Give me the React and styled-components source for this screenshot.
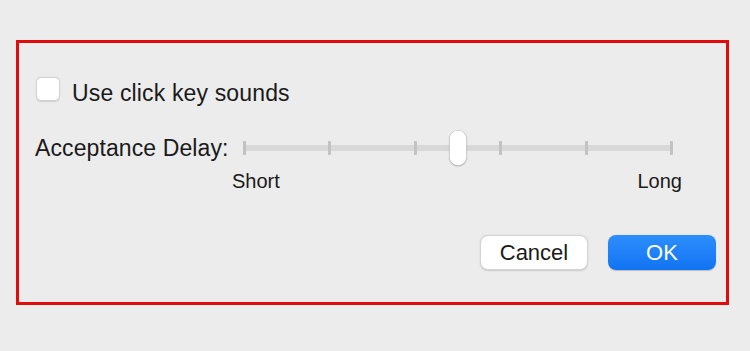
import React from "react";
import styled, { createGlobalStyle } from "styled-components";

const Global = createGlobalStyle`
  html, body {
    margin: 0;
    padding: 0;
    background: #ececec;
  }
  body {
    font-family: "Liberation Sans", Arial, sans-serif;
    color: #1a1a1a;
  }
`;

const Page = styled.div`
  width: 750px;
  height: 351px;
  padding: 40px 0 0 16px;
  box-sizing: border-box;
  background: #ececec;
`;

const Frame = styled.div`
  width: 713px;
  height: 265px;
  box-sizing: border-box;
  border: 3px solid #e20b0b;
  padding: 34px 10px 0 16px;
  display: flex;
  flex-direction: column;
`;

const CheckRow = styled.label`
  display: flex;
  align-items: flex-start;
  gap: 12px;
  padding-left: 1px;
`;

const Box = styled.span`
  width: 24px;
  height: 24px;
  box-sizing: border-box;
  border-radius: 5px;
  background: #ffffff;
  border: 1px solid #d2d2d2;
  box-shadow: 0 0.5px 1px rgba(0, 0, 0, 0.12);
`;

const CheckText = styled.span`
  font-size: 23px;
  line-height: 24px;
  margin-top: 4px;
  letter-spacing: 0.15px;
`;

const DelayRow = styled.div`
  display: flex;
  align-items: flex-start;
  margin-top: 25px;
`;

const DelayLabel = styled.span`
  width: 197px;
  flex: none;
  font-size: 23px;
  line-height: 36px;
  letter-spacing: 0.1px;
`;

const Slider = styled.div`
  width: 450px;
  display: flex;
  flex-direction: column;
`;

const TrackArea = styled.div`
  height: 36px;
  margin: 0 9px 0 11px;
  display: flex;
  align-items: center;
  position: relative;
`;

const Track = styled.div`
  flex: 1;
  height: 14px;
  display: flex;
  justify-content: space-between;
  background: linear-gradient(
    to bottom,
    transparent 0,
    transparent 4px,
    #d8d8d8 4px,
    #d8d8d8 10px,
    transparent 10px
  );
`;

const Tick = styled.span`
  width: 3px;
  height: 14px;
  border-radius: 1px;
  background: #c2c2c2;
`;

const Thumb = styled.span`
  position: absolute;
  left: 50%;
  top: 50%;
  width: 17px;
  height: 35px;
  transform: translate(-50%, -50%);
  border-radius: 9px;
  background: #ffffff;
  box-shadow: 0 0 0 0.5px rgba(0, 0, 0, 0.22), 0 1px 2px rgba(0, 0, 0, 0.2);
`;

const Ends = styled.div`
  display: flex;
  justify-content: space-between;
  font-size: 20px;
  line-height: 30px;
`;

const Buttons = styled.div`
  display: flex;
  justify-content: flex-end;
  gap: 20px;
  margin-top: 39px;
`;

const Button = styled.button`
  width: 108px;
  height: 35px;
  border-radius: 8px;
  font-family: "Liberation Sans", Arial, sans-serif;
  font-size: 22px;
  line-height: 33px;
  padding: 0;
  cursor: pointer;
  border: ${(p) => (p.$primary ? "none" : "1px solid #d4d4d4")};
  color: ${(p) => (p.$primary ? "#ffffff" : "#1a1a1a")};
  background: ${(p) =>
    p.$primary
      ? "linear-gradient(to bottom, #2d8efd, #1273f3)"
      : "#ffffff"};
  box-shadow: ${(p) =>
    p.$primary
      ? "0 0.5px 1px rgba(0,0,0,0.2)"
      : "0 0.5px 1.5px rgba(0,0,0,0.15)"};
`;

const ticks = [0, 1, 2, 3, 4, 5];

export default function App() {
  return (
    <>
      <Global />
      <Page>
        <Frame>
          <CheckRow>
            <Box />
            <CheckText>Use click key sounds</CheckText>
          </CheckRow>
          <DelayRow>
            <DelayLabel>Acceptance Delay:</DelayLabel>
            <Slider>
              <TrackArea>
                <Track>
                  {ticks.map((t) => (
                    <Tick key={t} />
                  ))}
                </Track>
                <Thumb />
              </TrackArea>
              <Ends>
                <span>Short</span>
                <span>Long</span>
              </Ends>
            </Slider>
          </DelayRow>
          <Buttons>
            <Button>Cancel</Button>
            <Button $primary>OK</Button>
          </Buttons>
        </Frame>
      </Page>
    </>
  );
}
